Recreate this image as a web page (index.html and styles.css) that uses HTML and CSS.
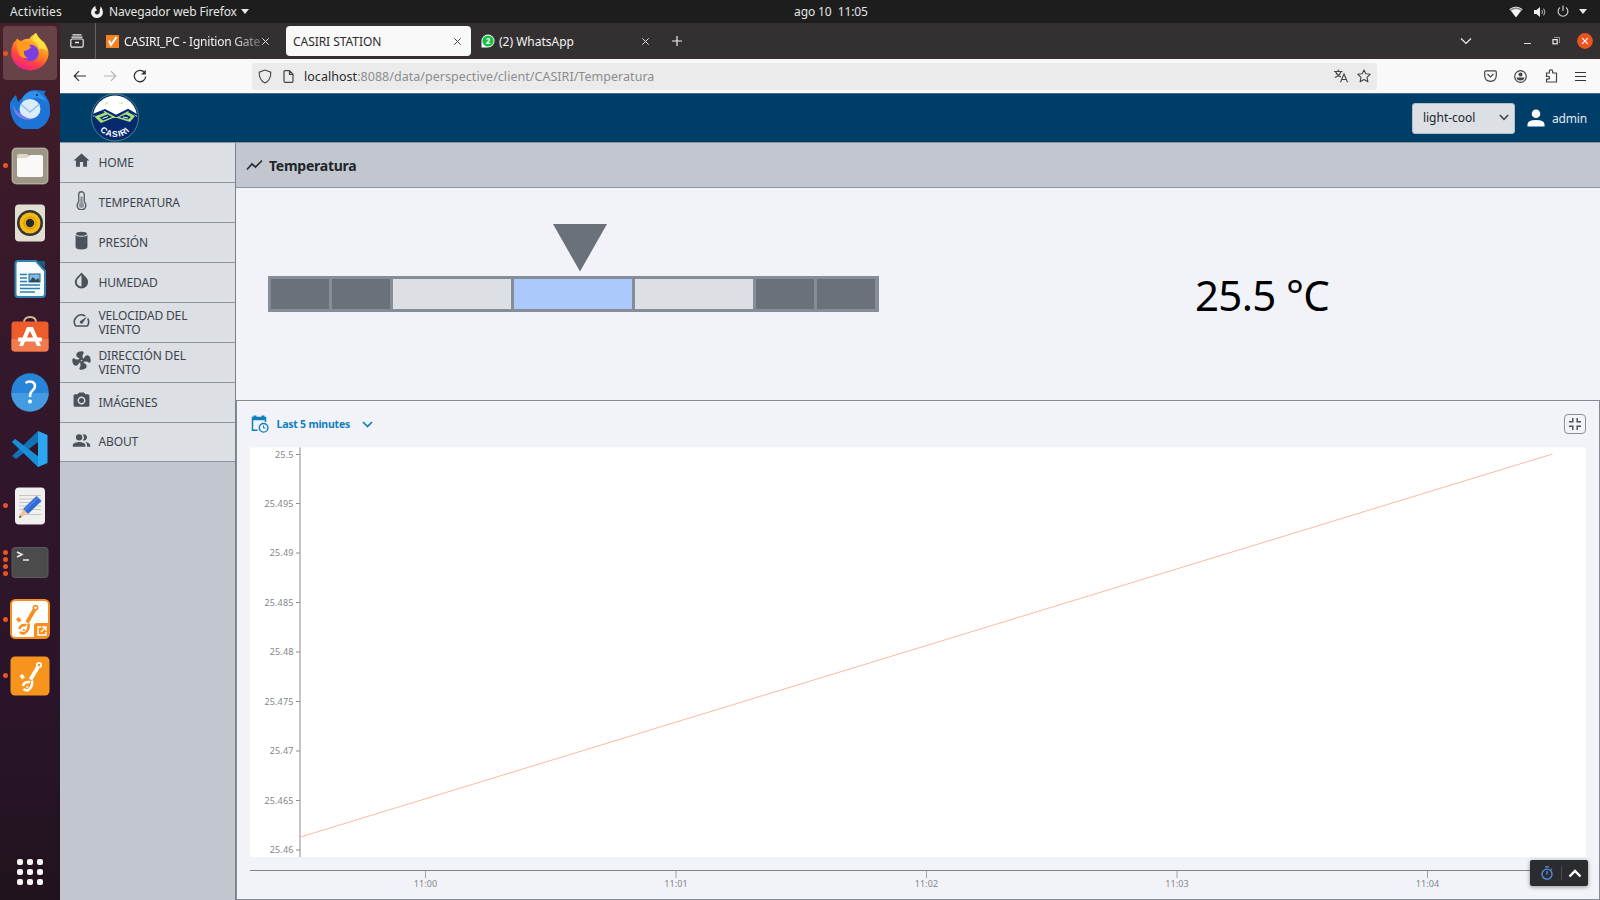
FILE: index.html
```html
<!DOCTYPE html>
<html lang="es">
<head>
<meta charset="utf-8">
<title>CASIRI STATION</title>
<link rel="stylesheet" href="styles.css">
</head>
<body>
<div class="desktop">
  <header class="topbar">
    <span class="activities">Activities</span>
    <span class="appmenu">
      <svg width="14" height="14" viewBox="0 0 14 14"><path d="M3 3Q0 6 1.600 9.800A6 6 0 0 0 12.900 6.500Q12.900 3 10.200 1Q11 3 9.700 4.400Q10.300 9.500 6.800 9.600Q4.300 9 4.800 6.200Q6 6.500 7 5Q5.200 4.400 5.500 1Q3.800 1.400 3 3Z" fill="#f0f0f0"/></svg>
      <span class="appname">Navegador web Firefox</span>
      <i class="caret"></i>
    </span>
    <span class="clock">ago 10&nbsp; 11:05</span>
    <span class="tray">
      <svg width="14" height="12" viewBox="0 0 14 12"><path d="M.5 3.500Q7-1.500 13.500 3.500L7 11.500Z" fill="#888"/><path d="M2 4.600Q7 1.500 12 4.600L7 11.200Z" fill="#f4f4f4"/><path d="M.6 3.400Q7-1.200 13.400 3.400" fill="none" stroke="#ddd"/></svg>
      <svg width="14" height="12" viewBox="0 0 14 12"><path d="M1 4H3.500L7 1V11L3.500 8H1Z" fill="#eee"/><path d="M8.800 4Q10.300 6 8.800 8M10.600 2.500Q13.300 6 10.600 9.500" fill="none" stroke="#bbb"/></svg>
      <svg width="12" height="13" viewBox="0 0 12 13"><path d="M3 2.500A4.900 4.900 0 1 0 9 2.500M6 .5V6" fill="none" stroke="#ccc" stroke-width="1.200"/></svg>
      <i class="caret"></i>
    </span>
  </header>

  <div class="workspace">
    <nav class="dock">
      <div class="app active"><i class="dots"><b></b></i>
        <svg width="40" height="40" viewBox="0 0 40 40"><defs><linearGradient id="ff" x1=".8" y1="0" x2=".3" y2="1"><stop offset="0" stop-color="#ffe94a"/><stop offset=".45" stop-color="#ff8a1e"/><stop offset=".75" stop-color="#ff3d4b"/><stop offset="1" stop-color="#e8208c"/></linearGradient></defs><path d="M4 9Q6 8 7 5.500Q9 7 11 8Q16 5 19 6Q22 2 26 0Q27 4 31 7L34 9Q39 16 38.500 22A18.800 18 0 0 1 1.300 22Q1 14 4 9Z" fill="url(#ff)"/><path d="M26 0Q22 4 23 8Q28 10 29 16Q34 15 37.500 18Q36 12 32 8Q28 4 26 0Z" fill="#ffe03e"/><circle cx="20.500" cy="20" r="8.200" fill="#7a3fe0"/><path d="M7 7Q11 11 18 11L21 14Q19 17 14 18Q13 23 18 25Q10 26 8 19Q6 13 7 7Z" fill="#ff9b1f"/></svg></div>
      <div class="app">
        <svg width="40" height="40" viewBox="0 0 40 40"><path d="M0 14Q3 8 6 6L8 13Q11 10 13 8Q17 1 25 1L36 2L34 5Q40 11 40 20A19.500 19 0 0 1 2 28Q-.5 21 0 14Z" fill="#1c74d6"/><path d="M13 8Q18 2 26 2Q34 6 37 14Q30 7 20 10Q14 10 12 15Z" fill="#2f93ec"/><ellipse cx="20" cy="20" rx="10.500" ry="10" fill="#dcecfb"/><path d="M10.500 15L20 23L29.500 15" fill="none" stroke="#8fc2ee" stroke-width="1.500"/><path d="M2 14Q5 22 12 26Q18 30 23 30Q12 33 5 24Z" fill="#7b7ee8"/><circle cx="27" cy="6" r="1" fill="#123"/></svg></div>
      <div class="app"><i class="dots"><b></b></i>
        <svg width="40" height="40" viewBox="0 0 40 40"><rect x="1.500" y="1.500" width="37" height="37" rx="5" fill="#9d9685"/><rect x="2.500" y="2.500" width="35" height="35" rx="4" fill="none" stroke="#b4ae9e"/><path d="M7 10Q7 8 9 8H17L19 10V17H7Z" fill="#ddd7c8"/><path d="M7 13Q7 12 8 12H17L20 9H31Q33 9 33 11V29Q33 31 31 31H9Q7 31 7 29Z" fill="#faf9f7"/></svg></div>
      <div class="app">
        <svg class="low" width="40" height="40" viewBox="0 0 40 40"><rect x="5" y="1.500" width="30" height="37" rx="4" fill="#e2dfd2"/><circle cx="20" cy="20" r="13" fill="#353535"/><circle cx="20" cy="20" r="10.500" fill="#f4b912"/><circle cx="20" cy="20" r="6" fill="none" stroke="#c8930d"/><circle cx="20" cy="20" r="4.200" fill="#282c30"/></svg></div>
      <div class="app">
        <svg width="40" height="40" viewBox="0 0 40 40"><path d="M8 2H26L35 12V35Q35 38 32 38H8Q5.500 38 5.500 35V5Q5.500 2 8 2Z" fill="#f8fafb" stroke="#2c85b5" stroke-width="2"/><path d="M27 2H35V9Z" fill="#185e83"/><path d="M10 15.500H17M10 19H17M10 22.500H17M10 26H30M10 29.500H30M10 33H25" stroke="#2481b4" stroke-width="1.500"/><rect x="19" y="15" width="11" height="8" fill="#85b9e1" stroke="#1d658c"/><path d="M19 23L23 18L26 21L28 19L30 23Z" fill="#314858"/></svg></div>
      <div class="app">
        <svg width="40" height="40" viewBox="0 0 40 40"><path d="M14 6.500Q14 1 20 1Q26 1 26 6.500" fill="none" stroke="#d6b998" stroke-width="1.800"/><rect x="1.500" y="5.500" width="37" height="30" rx="3" fill="#ee5c2b"/><path d="M1.500 23H38.500V32Q38.500 35.500 35 35.500H5Q1.500 35.500 1.500 32Z" fill="#f27b4d"/><path d="M17 11H23L31 30H27L20 15L13 30H9Z" fill="#fff"/><rect x="8" y="21.500" width="24" height="4" rx="1" fill="#fff"/></svg></div>
      <div class="app">
        <svg class="help" width="40" height="40" viewBox="0 0 40 40"><circle cx="20" cy="20" r="18.700" fill="#2684d9"/><path d="M1.300 21H38.700A18.700 18.700 0 0 1 1.300 21Z" fill="#439be1"/><path d="M15.500 11Q19 8.500 22.500 10Q26 12 24.500 16Q23 18.500 21.500 19.500Q20 21 20 25" fill="none" stroke="#fff" stroke-width="2.600"/><circle cx="20" cy="29.500" r="2" fill="#fff"/></svg></div>
      <div class="app">
        <svg width="40" height="40" viewBox="0 0 40 40"><path d="M2 13L5 10L29 28V38Z" fill="#127bc2"/><path d="M2 27L28 2V13L6 30Z" fill="#1272b4"/><path d="M2 13L5 10L30 29L28 38Z" fill="#198fda"/><path d="M28 2L37.500 6V34L28 38Z" fill="#2ba7f1"/></svg></div>
      <div class="app"><i class="dots"><b></b></i>
        <svg width="40" height="40" viewBox="0 0 40 40"><rect x="5" y="1.500" width="30" height="37" rx="4" fill="#f0f0ee"/><path d="M9 9.500H31M9 13H31M9 16.500H31M9 20H31M9 23.500H31M9 28.500H31" stroke="#c6c6c6"/><path d="M26.500 10L31.500 15L18 28L13 23Z" fill="#3468d2"/><path d="M28 11.500L14.500 24.500" stroke="#4b89ee" stroke-width="1.600"/><path d="M13 23L18 28L9 32Z" fill="#f0c49e"/><path d="M9 32L10 29.500L11.500 31Z" fill="#222"/></svg></div>
      <div class="app"><i class="dots"><b></b><b></b><b></b><b></b></i>
        <svg width="40" height="40" viewBox="0 0 40 40"><rect x="2" y="4.500" width="36" height="30" rx="3" fill="#4b4b4b" stroke="#5a5a5a"/><path d="M7 9L12 11.500L7 14M13 17H19" fill="none" stroke="#eee" stroke-width="1.500"/></svg></div>
      <div class="app"><i class="dots"><b></b></i>
        <svg width="40" height="40" viewBox="0 0 40 40"><rect x="1" y="1" width="38" height="38" rx="4.500" fill="#fff" stroke="#f78f1e" stroke-width="2"/><g fill="none" stroke="#f78f1e"><path d="M24.500 10.500L17 23.500" stroke-width="3.800"/><circle cx="25.500" cy="8.800" r="2.200" stroke-width="1.600"/><path d="M18.500 24.500Q19.500 30 15.500 33.500M16.500 26Q10 25.500 9.500 30M10 33Q12 35 15.500 34" stroke-width="2.600"/><circle cx="13.800" cy="31" r=".8"/><path d="M7.500 19L10 22.500" stroke-width="3.600"/></g><path d="M24 39V27Q24 24 27 24H39V36Q39 39 36 39Z" fill="#f78f1e"/><path d="M31 28H28V36H36V33M32 28H36V32M36 28L31 33" fill="none" stroke="#fff" stroke-width="1.400"/></svg></div>
      <div class="app"><i class="dots"><b></b></i>
        <svg width="40" height="40" viewBox="0 0 40 40"><rect x=".5" y=".5" width="39" height="39" rx="4.500" fill="#f7941e"/><g fill="none" stroke="#fff"><path d="M28 11L20.500 23.500" stroke-width="3.800"/><circle cx="29" cy="9" r="2.200" stroke-width="1.700"/><path d="M22 24.500Q23 30 19 33.500M20 26Q13.500 25.500 13 30M13.500 33Q15.500 35 19 34" stroke-width="2.500"/><circle cx="17.300" cy="31" r=".8"/><path d="M11 19L13.500 22.500" stroke-width="3.600"/></g></svg></div>
      <div class="grid-btn"><i></i><i></i><i></i><i></i><i></i><i></i><i></i><i></i><i></i></div>
    </nav>

    <div class="browser">
      <div class="tabs">
        <span class="view"><svg width="14" height="14" viewBox="0 0 14 14" fill="none" stroke="#eee" stroke-width="1.200"><path d="M2.500 .8H11.500M1.500 3.200H12.500"/><rect x=".8" y="5" width="12.400" height="8.200" rx="1.500"/><path d="M5 8.500H9" stroke-width="1.500"/></svg></span>
        <div class="tab t1"><svg width="13" height="13" viewBox="0 0 13 13"><rect width="13" height="13" fill="#f58220"/><path d="M3 5.500L5 10L10.500 2" fill="none" stroke="#fff" stroke-width="2"/></svg><span class="label fade">CASIRI_PC - Ignition Gate</span><svg class="x" width="7" height="7" viewBox="0 0 7 7"><path d="M.3 .3L6.700 6.700M6.700 .3L.3 6.700" stroke="#ddd"/></svg></div>
        <div class="tab t2"><span class="label">CASIRI STATION</span><svg class="x" width="7" height="7" viewBox="0 0 7 7"><path d="M.3 .3L6.700 6.700M6.700 .3L.3 6.700" stroke="#444"/></svg></div>
        <div class="tab t3"><svg width="14" height="14" viewBox="0 0 14 14"><path d="M.5 13.500V7A6.500 6.500 0 1 1 7 13.500Z" fill="#fff"/><circle cx="7" cy="7" r="5.600" fill="#13c143"/><text class="badge" x="7" y="10">2</text></svg><span class="label">(2) WhatsApp</span><svg class="x" width="7" height="7" viewBox="0 0 7 7"><path d="M.3 .3L6.700 6.700M6.700 .3L.3 6.700" stroke="#ddd"/></svg></div>
        <svg class="plus" width="10" height="10" viewBox="0 0 10 10"><path d="M5 0V10M0 5H10" stroke="#eee" stroke-width="1.200"/></svg>
        <span class="winctl">
          <svg width="12" height="8" viewBox="0 0 12 8"><path d="M1 1.500L6 6.500L11 1.500" fill="none" stroke="#eee" stroke-width="1.200"/></svg>
          <svg class="min" width="7" height="8" viewBox="0 0 7 8"><path d="M0 6.500H7" stroke="#ddd"/></svg>
          <svg class="max" width="8" height="8" viewBox="0 0 8 8" fill="none"><path d="M2 .5H7.500V6" stroke="#999"/><rect x="1" y="2.600" width="4.200" height="4.200" stroke="#eee" stroke-width="1.200"/></svg>
          <svg class="close" width="16" height="16" viewBox="0 0 16 16"><circle cx="8" cy="8" r="7.900" fill="#e95420"/><path d="M5.200 5.200L10.800 10.800M10.800 5.200L5.200 10.800" stroke="#fff" stroke-width="1.200"/></svg>
        </span>
      </div>

      <div class="navbar">
        <svg width="14" height="12" viewBox="0 0 14 12" fill="none" stroke="#333" stroke-width="1.200"><path d="M13 6H1.500M6 1.200L1.200 6L6 10.800"/></svg>
        <svg class="fwd" width="14" height="12" viewBox="0 0 14 12" fill="none" stroke="#b5b5b5" stroke-width="1.200"><path d="M1 6H12.500M8 1.200L12.800 6L8 10.800"/></svg>
        <svg class="reload" width="14" height="14" viewBox="0 0 14 14"><path d="M11.500 3.500A5.700 5.700 0 1 0 12.700 7.500" fill="none" stroke="#333" stroke-width="1.300"/><path d="M12.800 .8V5.500H8Z" fill="#333"/></svg>
        <div class="urlbar">
          <svg width="14" height="15" viewBox="0 0 14 15" fill="none" stroke="#444" stroke-width="1.100"><path d="M7 1L12.800 3.200Q13 11 7 14Q1 11 1.200 3.200Z"/></svg>
          <svg class="doc" width="11" height="13" viewBox="0 0 11 13" fill="none" stroke="#444" stroke-width="1.200"><path d="M2 .7H6.500L10 4.200V11Q10 12.300 8.700 12.300H2.200Q1 12.300 1 11V1.700Q1 .7 2 .7ZM6.500 1V4.300H10"/></svg>
          <span class="url"><b>localhost</b>:8088/data/perspective/client/CASIRI/Temperatura</span>
          <svg class="translate" width="14" height="14" viewBox="0 0 14 14" fill="none" stroke="#444" stroke-width="1.100"><path d="M0 2.500H8.500M4.200 .5V2.500M1.500 2.500Q3 6.500 7 8M7 2.500Q5.500 7 .8 8.500M6.500 13.200L10 5L13.500 13.200M7.800 10.500H12.200" /></svg>
          <svg class="star" width="14" height="14" viewBox="0 0 14 14" fill="none" stroke="#444" stroke-width="1.100" stroke-linejoin="round"><path d="M7 .9L8.800 4.800L13.200 5.300L10 8.300L10.900 12.800L7 10.600L3.100 12.800L4 8.300L.8 5.300L5.200 4.800Z"/></svg>
        </div>
        <span class="actions">
          <svg width="13" height="12" viewBox="0 0 13 12" fill="none" stroke="#444" stroke-width="1.200"><path d="M2 .8H11Q12.300 .8 12.300 2V5.500Q12 11.200 6.500 11.300Q1 11.200 .7 5.500V2Q.7 .8 2 .8ZM3.500 4L6.500 7L9.500 4"/></svg>
          <svg width="13" height="13" viewBox="0 0 13 13"><circle cx="6.500" cy="6.500" r="5.800" fill="none" stroke="#444" stroke-width="1.200"/><circle cx="6.500" cy="4.600" r="2" fill="#444"/><path d="M2.500 7.500H10.500Q10 10.400 6.500 10.400Q3 10.400 2.500 7.500Z" fill="#444"/></svg>
          <svg width="13" height="14" viewBox="0 0 13 14" fill="none" stroke="#444" stroke-width="1.200"><path d="M1.500 4H4.300V2.500Q4.300 .8 6 .8Q7.700 .8 7.700 2.500V4H11.500V13H1.500V10.200H3Q4.600 10 4.600 8.700Q4.600 7.400 3 7.300H1.500Z"/></svg>
          <svg width="11" height="10" viewBox="0 0 11 10" stroke="#333" stroke-width="1.200"><path d="M0 1.500H11M0 5.500H11M0 9.500H11"/></svg>
        </span>
      </div>

      <div class="appbar">
        <svg class="logo" width="50" height="50" viewBox="0 0 50 50"><defs><clipPath id="disc"><circle cx="25" cy="24.500" r="22"/></clipPath><path id="arc" d="M6 30Q11 44 25 44Q39 44 44 30"/></defs><circle cx="25" cy="24.500" r="23.500" fill="#06296f" stroke="#54a08a" stroke-width=".8"/><g clip-path="url(#disc)"><path d="M3 24Q2 1 25 1Q48 1 47 24L40 18L26 23L10 18Z" fill="#fff"/><path d="M15 10H19M29 10H33M15 12L17 10M31 11L33 9" stroke="#cfe9a5"/></g><path d="M4.500 23.500L18 18.500L27 24L37 18.500L45 23L40 29L27 25L23 25L11 30Z" fill="#a9e07a"/><path d="M9.500 24.500L17.500 21.500L22 24L13 27.500ZM41 24L36 21.500L29 24L38 26.500Z" fill="#06296f"/><path d="M12.500 25.500L18 23.500M33 24L38 25" stroke="#fff"/><path d="M3 22L15 17L26 23L38 17L47 22" fill="none" stroke="#06296f" stroke-width="2"/><text class="logotext"><textPath href="#arc" startOffset="50%">CASIRI</textPath></text></svg>
        <div class="select"><span>light-cool</span><svg width="10" height="7" viewBox="0 0 10 7"><path d="M.8 1L5 5.300L9.200 1" fill="none" stroke="#444b53" stroke-width="1.700"/></svg></div>
        <svg class="user" width="18" height="18" viewBox="0 0 18 18" fill="#fff"><circle cx="9" cy="4.800" r="4.300"/><path d="M.5 17.500V15Q1 11 9 11Q17 11 17.500 15V17.500Z"/></svg>
        <span class="admin">admin</span>
      </div>

      <div class="main">
        <aside class="menu">
          <a class="item"><svg viewBox="0 0 24 24"><path d="M10 20v-6h4v6h5v-8h3L12 3 2 12h3v8z"/></svg><span>HOME</span></a>
          <a class="item"><svg viewBox="0 0 24 24"><path d="M8.500 14V4.500A3.500 3.500 0 0 1 15.500 4.500V14A5.500 5.500 0 1 1 8.500 14Z" fill="none" stroke="#565d64" stroke-width="1.700"/><circle cx="12" cy="18" r="3.300" fill="#8d949b"/><path d="M12 18V7" stroke="#8d949b" stroke-width="3"/></svg><span>TEMPERATURA</span></a>
          <a class="item"><svg viewBox="0 0 24 24"><path d="M4.500 4.500Q5 7.300 12 7.300Q19 7.300 19.500 4.500V20Q19.500 23.500 12 23.500Q4.500 23.500 4.500 20Z"/><ellipse cx="12" cy="3.400" rx="7" ry="2.600"/></svg><span>PRESIÓN</span></a>
          <a class="item"><svg viewBox="0 0 24 24"><path d="M17.660 8l-5.660-6-5.660 6C2.500 12 3.500 16 5 18.500Q8 22 12 22Q16 22 19 18.500C20.500 16 21.500 12 17.660 8ZM6 14c0-2 .6-3.300 1.800-4.400L12 5v14.600C8.500 19.600 6 17 6 14Z"/></svg><span>HUMEDAD</span></a>
          <a class="item"><svg viewBox="0 0 24 24"><path d="M20.380 8.570l-1.230 1.850a8 8 0 0 1-.22 7.580H5.070A8 8 0 0 1 15.580 6.850l1.850-1.230A10 10 0 0 0 3.350 19a2 2 0 0 0 1.720 1h13.850a2 2 0 0 0 1.740-1 10 10 0 0 0-.27-10.440zm-9.790 6.840a2 2 0 0 0 2.830 0l5.660-8.490-8.490 5.660a2 2 0 0 0 0 2.830z"/></svg><span>VELOCIDAD DEL VIENTO</span></a>
          <a class="item"><svg viewBox="0 0 24 24"><path id="blade" d="M10.500 13L9 9Q5 7.500 5.500 4Q6.500 .5 12.500 .3Q15.500 .5 14.500 3Q12.500 5 13.500 8.500L15 12Z"/><use href="#blade" transform="rotate(90 12 12)"/><use href="#blade" transform="rotate(180 12 12)"/><use href="#blade" transform="rotate(270 12 12)"/><circle cx="12" cy="12" r="1.100" fill="#c6cace"/></svg><span>DIRECCIÓN DEL VIENTO</span></a>
          <a class="item"><svg viewBox="0 0 24 24"><circle cx="12" cy="12" r="3.200"/><path d="M9 2L7.170 4H4c-1.100 0-2 .9-2 2v12c0 1.100.9 2 2 2h16c1.100 0 2-.9 2-2V6c0-1.100-.9-2-2-2h-3.170L15 2H9zm3 15c-2.760 0-5-2.240-5-5s2.240-5 5-5 5 2.240 5 5-2.240 5-5 5z"/></svg><span>IMÁGENES</span></a>
          <a class="item"><svg viewBox="0 0 24 24"><circle cx="9" cy="8" r="4"/><path d="M9 14c-2.700 0-8 1.300-8 4v2h16v-2c0-2.700-5.300-4-8-4zM13.500 4.300a5.500 5.500 0 0 1 0 7.400A4 4 0 1 0 13.500 4.300zM16.700 13.700C18 15 19 16.300 19 18v2h4v-2c0-2.200-3.500-3.600-6.300-4.300z"/></svg><span>ABOUT</span></a>
        </aside>

        <section class="page">
          <div class="title"><svg width="17" height="12" viewBox="0 0 17 12"><path d="M1 10.500L6 5L9.500 8L16 1.500" fill="none" stroke="#2b3036" stroke-width="1.700"/></svg><h1>Temperatura</h1></div>
          <div class="status">
            <div class="indicator">
              <svg class="pointer" width="54" height="48" viewBox="0 0 54 48"><path d="M0 0H54L27 47.500Z" fill="#6a7179"/></svg>
              <div class="gauge"><i class="dark"></i><i class="dark"></i><i class="wide"></i><i class="wide blue"></i><i class="wide"></i><i class="dark"></i><i class="dark"></i></div>
            </div>
            <div class="value">25.5 °C</div>
          </div>
          <div class="chart">
            <div class="chartbar">
              <svg width="18" height="18" viewBox="0 0 18 18" fill="none" stroke="#1080bd"><path d="M6.500 15.300H1.500V2.500H14.500V7" stroke-width="1.500"/><path d="M1 3.800H15M4 .5V4M12 .5V4" stroke-width="3"/><circle cx="12.600" cy="12.800" r="4.300" stroke-width="1.400"/><path d="M12.500 10.500V13H14.500"/></svg>
              <span class="range">Last 5 minutes</span>
              <svg width="11" height="7" viewBox="0 0 11 7"><path d="M1 1L5.500 5.500L10 1" fill="none" stroke="#1080bd" stroke-width="1.700"/></svg>
              <span class="shrink"><svg width="12" height="12" viewBox="0 0 12 12" fill="none" stroke="#4d535a" stroke-width="1.500"><path d="M0 3.800H3.800V0M8.200 0V3.800H12M12 8.200H8.200V12M3.800 12V8.200H0"/></svg></span>
            </div>
            <svg class="plot" width="1336" height="452" viewBox="250 447 1336 452">
              <rect x="250" y="447.500" width="1336" height="409.500" fill="#fff"/>
              <path d="M300 447.500V857" stroke="#b3b5b6" stroke-width="1.600"/>
              <path d="M296 454.500H300M296 503.500H300M296 553H300M296 602.500H300M296 652H300M296 701.500H300M296 751H300M296 800.500H300M296 850H300" stroke="#8b8e92"/>
              <g class="ylab"><text x="293.500" y="457.500">25.5</text><text x="293.500" y="507">25.495</text><text x="293.500" y="556.400">25.49</text><text x="293.500" y="605.900">25.485</text><text x="293.500" y="655.300">25.48</text><text x="293.500" y="704.800">25.475</text><text x="293.500" y="754.200">25.47</text><text x="293.500" y="803.700">25.465</text><text x="293.500" y="853.200">25.46</text></g>
              <path d="M250 870.500H1586" stroke="#7d8389"/>
              <path d="M425.500 871V878M676 871V878M926.500 871V878M1177 871V878M1427.500 871V878" stroke="#a0a4a8"/>
              <g class="xlab"><text x="425.500" y="886.500">11:00</text><text x="676" y="886.500">11:01</text><text x="926.500" y="886.500">11:02</text><text x="1177" y="886.500">11:03</text><text x="1427.500" y="886.500">11:04</text></g>
              <path d="M300.500 837L1552.500 454" fill="none" stroke="#fdba9f" stroke-width="1"/>
            </svg>
          </div>
        </section>
      </div>
      <div class="widget">
        <svg width="12" height="14" viewBox="0 0 12 14" fill="none" stroke="#5a94e8" stroke-width="1.300"><circle cx="6" cy="8.200" r="5"/><path d="M6 5V8.500M4 .8H8M10 3L11 4"/></svg>
        <i></i>
        <svg width="14" height="9" viewBox="0 0 14 9"><path d="M1.500 7.500L7 2L12.500 7.500" fill="none" stroke="#fff" stroke-width="2.400"/></svg>
      </div>
    </div>
  </div>
</div>
</body>
</html>
```
FILE: styles.css
```css
* { box-sizing: border-box; }
body { margin: 0; font-family: "Noto Sans", sans-serif; }
svg { display: block; flex: none; }
.desktop { width: 1600px; height: 900px; display: flex; flex-direction: column; overflow: hidden; background: #2c1529; }

.topbar { height: 23px; flex: none; background: #1d1d1d; color: #e4e4e4; font-size: 12px; display: grid; grid-template-columns: 80px 704px 1fr auto; align-items: center; padding: 0 13px 0 10px; line-height: 22px; }
.activities { letter-spacing: .2px; }
.appmenu { display: flex; align-items: center; }
.appname { margin: 0 4px 0 5px; white-space: nowrap; letter-spacing: -.13px; }
.clock { white-space: nowrap; letter-spacing: -.1px; }
.tray { display: flex; align-items: center; gap: 10px; }
.caret { width: 0; height: 0; border: 4px solid transparent; border-top: 5px solid #e8e8e8; border-bottom: 0; }

.workspace { flex: 1; display: flex; min-height: 0; }
.dock { width: 60px; flex: none; background: linear-gradient(#46202a 0, #3b1a2a 18%, #30162b 52%, #2a1429 78%, #20131d 100%); display: flex; flex-direction: column; padding-top: 1px; }
.app { height: 56.7px; flex: none; display: flex; align-items: center; justify-content: center; position: relative; }
.app.active { background: #674348; border-radius: 4px; margin: 2px 3px 0; height: 54px; margin-bottom: .7px; }
.low { margin-top: 1px; }
.dots { position: absolute; left: 3px; top: 0; bottom: 0; display: flex; flex-direction: column; justify-content: center; gap: 2px; }
.active .dots { left: 0; }
.dots b { width: 5px; height: 5px; border-radius: 50%; background: #e95420; }
.grid-btn { margin: auto auto 15px; display: grid; grid-template-columns: repeat(3, 6px); gap: 4px; }
.grid-btn i { height: 6px; border-radius: 2px; background: #f3f3f3; }

.browser { width: 1540px; position: relative; display: flex; flex-direction: column; }
.tabs { height: 36px; flex: none; background: #343031; display: flex; align-items: center; color: #f3f3f3; font-size: 12px; }
.view { width: 36px; height: 36px; border-right: 1px solid #656162; display: flex; align-items: center; padding-left: 10px; }
.tab { height: 30px; display: flex; align-items: center; white-space: nowrap; }
.tab .x { margin-left: auto; }
.t1 { width: 190px; padding: 0 17px 0 10px; }
.t1 .label { margin-left: 5px; letter-spacing: -.22px; }
.fade { -webkit-mask-image: linear-gradient(90deg, #000 78%, rgba(0,0,0,.3)); mask-image: linear-gradient(90deg, #000 78%, rgba(0,0,0,.3)); }
.t2 { width: 185px; background: #f9f9fa; color: #2c2a2b; border-radius: 4px; padding: 0 10px 0 7px; }
.t2 .label { letter-spacing: -.05px; }
.t3 { width: 178px; padding: 0 0 0 10px; }
.t3 .label { margin-left: 4px; }
.badge { font: bold 8px "Noto Sans", sans-serif; fill: #fff; text-anchor: middle; }
.plus { margin-left: 23px; }
.winctl { margin-left: auto; display: flex; align-items: center; padding-right: 7px; }
.min { margin-left: 52px; }
.max { margin-left: 21px; }
.close { margin-left: 17px; }

.navbar { height: 34px; flex: none; background: #f9f9fa; display: flex; align-items: center; padding-left: 13px; }
.fwd { margin-left: 16px; }
.reload { margin-left: 16px; }
.urlbar { width: 1125px; height: 27px; margin-left: 105px; border-radius: 3px; background: #ebebec; display: flex; align-items: center; padding: 0 6px 0 6px; font-size: 12.500px; color: #8d8d8d; }
.doc { margin-left: 11px; }
.url { margin-left: 10px; white-space: nowrap; letter-spacing: .035px; }
.url b { font-weight: 400; color: #2b2b2b; }
.translate { margin-left: auto; }
.star { margin-left: 9px; }
.actions { margin-left: auto; display: flex; align-items: center; gap: 17.500px; padding-right: 14px; }

.appbar { height: 50px; flex: none; background: #003e6a; border-bottom: 1px solid #8b939c; border-top: 1px solid #4b6a85; display: flex; align-items: center; color: #e2e9f0; }
.logo { margin-left: 30px; }
.logotext { font: bold 8.500px "Liberation Sans", sans-serif; fill: #fff; text-anchor: middle; letter-spacing: .9px; }
.select { margin-left: auto; width: 103px; height: 31px; background: #dcdfe4; border: 1px solid #b9bec6; border-radius: 3px; color: #20262c; display: flex; align-items: center; justify-content: space-between; padding: 0 5px 1px 10px; font-size: 12px; }
.user { margin-left: 12px; }
.admin { margin: 0 13px 0 7px; font-size: 12px; letter-spacing: -.15px; }

.main { flex: 1; display: flex; min-height: 0; }
.menu { width: 176px; flex: none; background: #c2c6ce; border-right: 1px solid #7a818b; }
.item { display: flex; align-items: center; height: 40px; background: #dcdfe4; border-bottom: 1px solid #8f959d; padding-left: 12px; color: #3e444b; font-size: 12px; letter-spacing: -.15px; line-height: 13.300px; }
.item:last-child { height: 39px; }
.item svg { width: 19px; height: 19px; fill: #4c5259; margin: -4px 7.500px 0 0; }
.item span { width: 110px; }

.page { flex: 1; display: flex; flex-direction: column; background: #f2f3f8; min-width: 0; }
.title { height: 45px; flex: none; background: #c2c6ce; border-bottom: 1px solid #8f959d; display: flex; align-items: center; padding-left: 10px; color: #20252b; }
.title h1 { margin: 0 0 0 6px; font-size: 14px; font-weight: 700; letter-spacing: -.25px; }
.status { height: 212px; flex: none; display: flex; }
.indicator { margin: 36px 0 0 31.500px; width: 611.500px; }
.pointer { margin-left: 285px; }
.gauge { margin-top: 4px; height: 36px; background: #868d99; display: grid; grid-template-columns: 58px 58px 118.300px 118.300px 118.300px 58px 58px; column-gap: 3px; padding: 3px 0 3px 3px; }
.gauge i { background: #dcdfe4; }
.gauge .dark { background: #6a7179; }
.gauge .blue { background: #abc9fb; }
.value { margin: 78px 0 0 316px; font-size: 42px; line-height: 58px; letter-spacing: -.65px; color: #000; white-space: nowrap; }
.chart { flex: 1; border: 1px solid #858b95; padding: 0 0 0 13px; display: flex; flex-direction: column; min-height: 0; }
.chartbar { height: 46px; flex: none; display: flex; align-items: center; padding: 0 13px 0 1px; }
.range { margin: 0 12px 0 7.500px; font-size: 10.500px; font-weight: 700; letter-spacing: -.22px; color: #1080bd; }
.shrink { margin-left: auto; width: 22px; height: 20px; border: 1px solid #8a8f96; border-radius: 4px; display: flex; align-items: center; justify-content: center; }
.ylab, .xlab { font-size: 9px; fill: #82868b; }
.ylab { text-anchor: end; letter-spacing: .15px; }
.xlab { text-anchor: middle; letter-spacing: .1px; }

.widget { position: absolute; left: 1470px; top: 837px; width: 58px; height: 26px; border-radius: 2px; background: #2a2c30; box-shadow: 0 1px 4px rgba(0,0,0,.4); display: flex; align-items: center; justify-content: space-between; padding: 0 6px 0 11px; }
.widget i { width: 1px; height: 14px; background: #484b50; margin-left: 1px; }
```
